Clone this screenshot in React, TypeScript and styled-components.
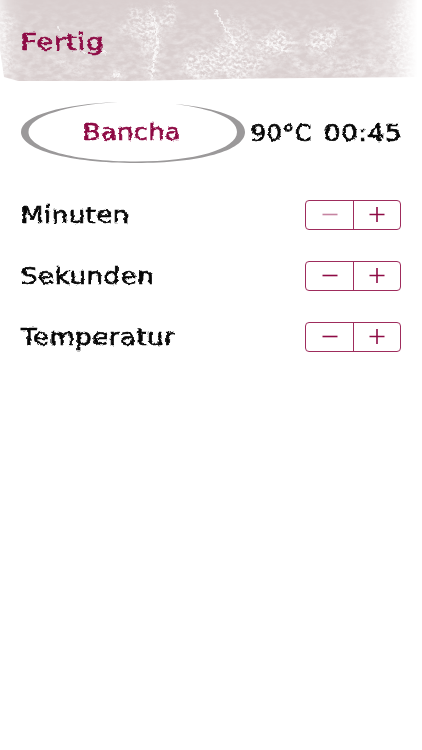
import React from "react";
import styled, { createGlobalStyle } from "styled-components";

const WINE = "#8e0b45";

const GlobalStyle = createGlobalStyle`
  * { box-sizing: border-box; }
  body { margin: 0; background: #fff; }
`;

const Screen = styled.main`
  width: 422px;
  height: 750px;
  overflow: hidden;
  background: #fff;
  color: #070707;
  font-family: "DejaVu Sans", sans-serif;
`;

const Header = styled.header`
  position: relative;
  height: 84px;
  padding: 28px 21px 0;
`;

const Texture = styled.svg`
  position: absolute;
  inset: 0;
  display: block;
`;

const Chalk = styled.span<{ $stretch?: number; $wine?: boolean }>`
  position: relative;
  display: block;
  width: max-content;
  font-size: 22.5px;
  line-height: 28px;
  white-space: pre;
  letter-spacing: 0.5px;
  color: ${(p) => (p.$wine ? WINE : "#070707")};
  -webkit-text-stroke: 0.65px currentColor;
  transform: scaleX(${(p) => p.$stretch ?? 1});
  transform-origin: left center;
  filter: url(#chalk);
`;

const DoneButton = styled.button`
  display: block;
  padding: 0;
  border: 0;
  background: none;
  font: inherit;
`;

const Summary = styled.section`
  display: flex;
  height: 100px;
  padding: 17px 21px 0;
`;

const TeaName = styled.div`
  position: relative;
  width: 224px;
  height: 63px;
  padding: 17px 0 0 62px;
`;

const Ring = styled.svg`
  position: absolute;
  inset: 0;
`;

const Reading = styled.div`
  display: flex;
  padding: 18px 0 0 6px;
`;

const Temperature = styled.div`
  width: 73px;
`;

const Settings = styled.section`
  display: grid;
  grid-template-rows: repeat(3, 61px);
  padding: 0 21px;
`;

const Row = styled.div`
  display: flex;
  align-items: center;
  justify-content: space-between;
`;

const Stepper = styled.div`
  display: grid;
  grid-template-columns: 47px 1fr;
  width: 96px;
  height: 30px;
  border: 1px solid #9e2c5c;
  border-radius: 4px;
`;

const Step = styled.button`
  display: grid;
  place-items: center;
  padding: 0;
  border: 0 solid #9e2c5c;
  background: none;
  color: ${WINE};
  & + & { border-left-width: 1px; }
`;

const Filters = styled.svg`
  position: absolute;
  width: 0;
  height: 0;
`;

function HeaderTexture() {
  return (
    <Texture width="422" height="84" viewBox="0 0 422 84" aria-hidden="true">
      <defs>
        <filter id="grain" x="0" y="0" width="100%" height="100%" colorInterpolationFilters="sRGB">
          <feTurbulence type="fractalNoise" baseFrequency=".3 .36" numOctaves="3" seed="38" />
          <feColorMatrix values="0 0 0 0 1  0 0 0 0 1  0 0 0 0 1  2.4 1.2 0 0 -1.4" />
          <feGaussianBlur stdDeviation=".45" />
        </filter>
        <filter id="weave" x="0" y="0" width="100%" height="100%" colorInterpolationFilters="sRGB">
          <feTurbulence type="fractalNoise" baseFrequency=".12 .2" numOctaves="4" seed="12" />
          <feColorMatrix values="0 0 0 0 1  0 0 0 0 1  0 0 0 0 1  1 1 0 0 -.75" />
          <feGaussianBlur stdDeviation=".6" />
        </filter>
        <linearGradient id="fade" x1="0" y1="0" x2="0" y2="1">
          <stop offset="0" stopColor="#fff" stopOpacity=".15" />
          <stop offset=".4" stopColor="#fff" stopOpacity=".8" />
          <stop offset="1" stopColor="#fff" />
        </linearGradient>
        <mask id="lower"><rect width="422" height="84" fill="url(#fade)" /></mask>
        <filter id="soft" x="-80%" y="-80%" width="260%" height="260%">
          <feTurbulence type="fractalNoise" baseFrequency=".07" numOctaves="3" seed="5" result="noise" />
          <feDisplacementMap in="SourceGraphic" in2="noise" scale="34" xChannelSelector="R" yChannelSelector="G" />
          <feGaussianBlur stdDeviation="3" />
        </filter>
        <filter id="edge" x="-10%" y="-10%" width="120%" height="120%">
          <feTurbulence type="fractalNoise" baseFrequency=".25" numOctaves="3" seed="4" result="noise" />
          <feDisplacementMap in="SourceGraphic" in2="noise" scale="7" xChannelSelector="R" yChannelSelector="G" />
          <feGaussianBlur stdDeviation=".6" />
        </filter>
        <linearGradient id="sides">
          <stop offset="0" stopColor="#fff" stopOpacity=".45" />
          <stop offset=".018" stopColor="#fff" stopOpacity=".8" />
          <stop offset=".055" stopColor="#fff" />
          <stop offset=".85" stopColor="#fff" />
          <stop offset=".93" stopColor="#fff" stopOpacity=".75" />
          <stop offset=".99" stopColor="#fff" stopOpacity="0" />
        </linearGradient>
        <mask id="sheet"><path d="M0 0H422V77L250 78.5L130 81L18 81L4 77L0 50Z" fill="url(#sides)" /></mask>
        <mask id="worn">
          <g fill="#fff" filter="url(#soft)">
            <ellipse cx="142" cy="23" rx="17" ry="14" opacity=".65" />
            <ellipse cx="168" cy="16" rx="12" ry="13" opacity=".7" />
            <ellipse cx="152" cy="52" rx="9" ry="28" opacity=".75" />
            <ellipse cx="77" cy="65" rx="17" ry="5" opacity=".6" />
            <ellipse cx="115" cy="74" rx="7" ry="3" />
            <ellipse cx="225" cy="66" rx="46" ry="14" opacity=".8" />
            <ellipse cx="231" cy="40" rx="15" ry="18" opacity=".7" />
            <ellipse cx="278" cy="43" rx="19" ry="10" opacity=".85" />
            <ellipse cx="324" cy="41" rx="15" ry="13" opacity=".85" />
            <ellipse cx="335" cy="66" rx="45" ry="8" opacity=".5" />
            <ellipse cx="3" cy="45" rx="8" ry="45" opacity=".6" />
            <ellipse cx="410" cy="45" rx="22" ry="44" opacity=".6" />
          </g>
        </mask>
      </defs>
      <g mask="url(#sheet)">
        <rect width="422" height="84" fill="#d9cfcf" />
        <g mask="url(#lower)"><rect width="422" height="84" filter="url(#weave)" opacity=".6" /></g>
        <g mask="url(#worn)"><rect width="422" height="84" filter="url(#grain)" /></g>
        <g fill="none" stroke="#fff" strokeLinecap="round" filter="url(#edge)">
          <path d="M215 10L226 30L237 47" strokeWidth="1.5" opacity=".7" />
          <path d="M150 12Q160 29 156 49L152 77" strokeWidth="1.5" opacity=".7" />
          <path d="M58 28L59 30M82 52L85 53M102 51L106 53M114 75L119 74" strokeWidth="2" opacity=".7" />
          <path d="M264 41L279 46L287 53M308 45L322 42L331 47" strokeWidth="1.5" opacity=".6" />
        </g>
      </g>
    </Texture>
  );
}

function Sign({ plus = false, muted = false }: { plus?: boolean; muted?: boolean }) {
  return (
    <svg width="16" height="16" viewBox="0 0 16 16" fill="none" stroke="currentColor" strokeWidth="1.6" opacity={muted ? 0.5 : 1}>
      <path d={plus ? "M.5 7.5H15.5M8 0V15" : "M.5 7.5H15.5"} />
    </svg>
  );
}

const settings = [
  { label: "Minuten", stretch: 1.15, disabled: true },
  { label: "Sekunden", stretch: 1.155, disabled: false },
  { label: "Temperatur", stretch: 1.15, disabled: false },
];

export default function App() {
  return (
    <Screen>
      <GlobalStyle />
      <Filters aria-hidden="true">
        <filter id="chalk" x="-5%" y="-10%" width="110%" height="120%" colorInterpolationFilters="sRGB">
          <feTurbulence type="fractalNoise" baseFrequency=".22" numOctaves="2" seed="7" result="noise" />
          <feDisplacementMap in="SourceGraphic" in2="noise" scale="3.4" xChannelSelector="R" yChannelSelector="G" />
        </filter>
      </Filters>
      <Header>
        <HeaderTexture />
        <DoneButton><Chalk $wine $stretch={1.24}>Fertig</Chalk></DoneButton>
      </Header>
      <Summary>
        <TeaName>
          <Ring width="224" height="63" viewBox="0 0 224 63" aria-hidden="true">
            <path fill="#9b999a" d="M97 1C43 3 0 14 0 31C0 49 49 62 115 62C178 62 224 50 224 31C224 16 196 7 154 3C192 8 216 17 216 31C216 48 174 60.5 115 60.5C53 60.5 7.5 48 7.5 31C7.5 15 47 4 97 1Z" />
          </Ring>
          <Chalk $wine $stretch={1.13}>Bancha</Chalk>
        </TeaName>
        <Reading>
          <Temperature><Chalk $stretch={1.06}>90°C</Chalk></Temperature>
          <Chalk $stretch={1.16}>00:45</Chalk>
        </Reading>
      </Summary>
      <Settings>
        {settings.map(({ label, stretch, disabled }) => (
          <Row key={label}>
            <Chalk $stretch={stretch}>{label}</Chalk>
            <Stepper>
              <Step disabled={disabled} aria-label={`${label} verringern`}><Sign muted={disabled} /></Step>
              <Step aria-label={`${label} erhöhen`}><Sign plus /></Step>
            </Stepper>
          </Row>
        ))}
      </Settings>
    </Screen>
  );
}
